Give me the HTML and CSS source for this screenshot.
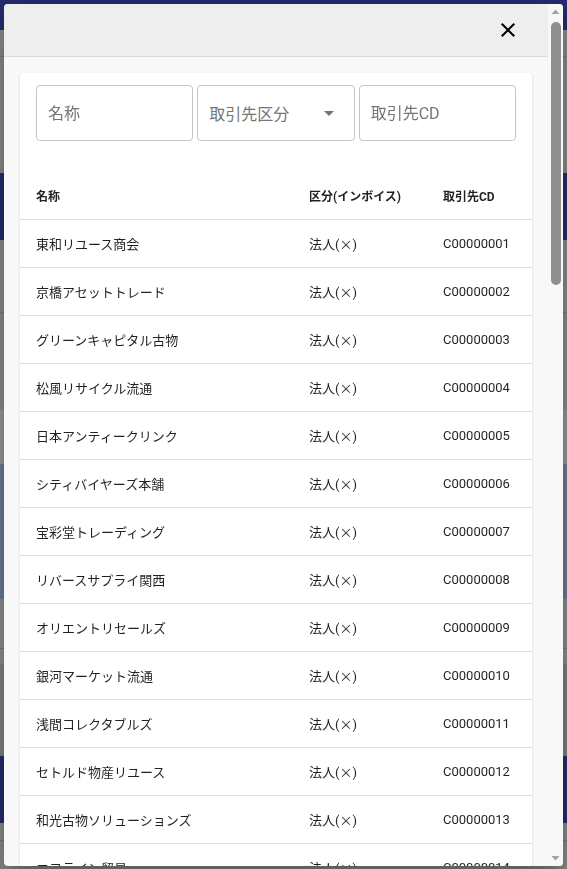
FILE: index.html
```html
<!DOCTYPE html>
<html lang="ja">
<head>
<meta charset="utf-8">
<title>取引先選択</title>
<link rel="stylesheet" href="styles.css">
</head>
<body>
<div class="page-bg"></div>
<div class="dialog" role="dialog">
  <div class="dialog-main">
    <header class="dialog-header">
      <button class="close-btn" type="button" aria-label="閉じる">
        <svg viewBox="0 0 24 24" width="24" height="24"><path d="M19 6.41 17.59 5 12 10.59 6.41 5 5 6.41 10.59 12 5 17.59 6.41 19 12 13.41 17.59 19 19 17.59 13.41 12z"/></svg>
      </button>
    </header>
    <div class="dialog-body">
      <section class="card">
        <div class="filters">
          <input class="field" type="text" placeholder="名称">
          <div class="field select">
            <span class="select-label">取引先区分</span>
            <svg class="select-arrow" viewBox="0 0 24 24" width="24" height="24"><path d="M7 10l5 5 5-5z"/></svg>
          </div>
          <input class="field" type="text" placeholder="取引先CD">
        </div>
        <div class="grid">
          <div class="row head"><div class="cell">名称</div><div class="cell">区分(インボイス)</div><div class="cell">取引先CD</div></div>
          <div class="row"><div class="cell">東和リユース商会</div><div class="cell">法人(<span class="mark">×</span>)</div><div class="cell">C00000001</div></div>
          <div class="row"><div class="cell">京橋アセットトレード</div><div class="cell">法人(<span class="mark">×</span>)</div><div class="cell">C00000002</div></div>
          <div class="row"><div class="cell">グリーンキャピタル古物</div><div class="cell">法人(<span class="mark">×</span>)</div><div class="cell">C00000003</div></div>
          <div class="row"><div class="cell">松風リサイクル流通</div><div class="cell">法人(<span class="mark">×</span>)</div><div class="cell">C00000004</div></div>
          <div class="row"><div class="cell">日本アンティークリンク</div><div class="cell">法人(<span class="mark">×</span>)</div><div class="cell">C00000005</div></div>
          <div class="row"><div class="cell">シティバイヤーズ本舗</div><div class="cell">法人(<span class="mark">×</span>)</div><div class="cell">C00000006</div></div>
          <div class="row"><div class="cell">宝彩堂トレーディング</div><div class="cell">法人(<span class="mark">×</span>)</div><div class="cell">C00000007</div></div>
          <div class="row"><div class="cell">リバースサプライ関西</div><div class="cell">法人(<span class="mark">×</span>)</div><div class="cell">C00000008</div></div>
          <div class="row"><div class="cell">オリエントリセールズ</div><div class="cell">法人(<span class="mark">×</span>)</div><div class="cell">C00000009</div></div>
          <div class="row"><div class="cell">銀河マーケット流通</div><div class="cell">法人(<span class="mark">×</span>)</div><div class="cell">C00000010</div></div>
          <div class="row"><div class="cell">浅間コレクタブルズ</div><div class="cell">法人(<span class="mark">×</span>)</div><div class="cell">C00000011</div></div>
          <div class="row"><div class="cell">セトルド物産リユース</div><div class="cell">法人(<span class="mark">×</span>)</div><div class="cell">C00000012</div></div>
          <div class="row"><div class="cell">和光古物ソリューションズ</div><div class="cell">法人(<span class="mark">×</span>)</div><div class="cell">C00000013</div></div>
          <div class="row"><div class="cell">エコライン貿易</div><div class="cell">法人(<span class="mark">×</span>)</div><div class="cell">C00000014</div></div>
          <div class="row"><div class="cell">富士サイクルトレード</div><div class="cell">法人(<span class="mark">×</span>)</div><div class="cell">C00000015</div></div>
          <div class="row"><div class="cell">北斗リユースセンター</div><div class="cell">法人(<span class="mark">×</span>)</div><div class="cell">C00000016</div></div>
          <div class="row"><div class="cell">青葉アンティーク商事</div><div class="cell">法人(<span class="mark">×</span>)</div><div class="cell">C00000017</div></div>
          <div class="row"><div class="cell">大和ブランド買取</div><div class="cell">法人(<span class="mark">×</span>)</div><div class="cell">C00000018</div></div>
          <div class="row"><div class="cell">さくら古物商会</div><div class="cell">法人(<span class="mark">×</span>)</div><div class="cell">C00000019</div></div>
          <div class="row"><div class="cell">丸善リサイクル</div><div class="cell">法人(<span class="mark">×</span>)</div><div class="cell">C00000020</div></div>
        </div>
      </section>
    </div>
  </div>
  <div class="scrollbar" aria-hidden="true">
    <svg class="sb-arrow" viewBox="0 0 15 15" width="15" height="15"><path d="M3.5 10 7.5 5.5 11.5 10z"/></svg>
    <div class="sb-track">
      <div class="sb-thumb"></div>
    </div>
    <svg class="sb-arrow" viewBox="0 0 15 15" width="15" height="15"><path d="M3.5 5 7.5 9.5 11.5 5z"/></svg>
  </div>
</div>
</body>
</html>
```

FILE: styles.css
```css
html, body {
  margin: 0;
  padding: 0;
  height: 100%;
}

body {
  font-family: "Roboto", "Noto Sans CJK JP", sans-serif;
  color: rgba(0, 0, 0, 0.87);
  overflow: hidden;
}

.page-bg {
  height: 100%;
  background: linear-gradient(to bottom,
    #262c6e 0 30px,
    #8a8a8a 30px 56px,
    #777777 56px 57px,
    #8a8a8a 57px 173px,
    #262c6e 173px 240px,
    #8b8b8b 240px 312px,
    #7a7a7a 312px 313px,
    #8b8b8b 313px 409px,
    #979797 409px 464px,
    #6c7d95 464px 599px,
    #8e8e8e 599px 648px,
    #7a7a7a 648px 649px,
    #8e8e8e 649px 664px,
    #808080 664px 756px,
    #262c6e 756px 823px,
    #8a8a8a 823px 840px,
    #777777 840px 841px,
    #8a8a8a 841px);
}

.dialog {
  position: fixed;
  top: 4px;
  left: 4px;
  right: 4px;
  bottom: 3px;
  display: flex;
  background: #f8f8f8;
  border-radius: 4px;
  overflow: hidden;
  box-shadow: 0 11px 15px -7px rgba(0, 0, 0, 0.2), 0 24px 38px 3px rgba(0, 0, 0, 0.14), 0 9px 46px 8px rgba(0, 0, 0, 0.12);
}

.dialog-main {
  flex: 1;
  min-width: 0;
  overflow: hidden;
}

.dialog-header {
  height: 53px;
  box-sizing: border-box;
  background: #eeeeee;
  border-bottom: 1px solid #dcdcdc;
  display: flex;
  align-items: center;
  justify-content: flex-end;
  padding-right: 16px;
}

.close-btn {
  width: 48px;
  height: 48px;
  border: 0;
  padding: 0;
  background: transparent;
  display: flex;
  align-items: center;
  justify-content: center;
  cursor: pointer;
}

.close-btn svg {
  fill: #000;
}

.dialog-body {
  padding: 16px;
}

.card {
  background: #ffffff;
  border-radius: 4px;
  box-shadow: 0 2px 1px -1px rgba(0, 0, 0, 0.2), 0 1px 1px 0 rgba(0, 0, 0, 0.14), 0 1px 3px 0 rgba(0, 0, 0, 0.12);
}

.filters {
  display: grid;
  grid-template-columns: 1fr 1fr 1fr;
  gap: 4px;
  padding: 12px 16px 31px;
}

.field {
  box-sizing: border-box;
  height: 56px;
  width: 100%;
  border: 1px solid #c4c4c4;
  border-radius: 4px;
  padding: 0 11px;
  font-family: inherit;
  font-size: 16px;
  color: rgba(0, 0, 0, 0.87);
  background: #fff;
  outline: none;
}

.field::placeholder {
  color: #757575;
  opacity: 1;
}

.select {
  display: flex;
  align-items: center;
  justify-content: space-between;
  padding-right: 13px;
}

.select-label {
  color: #757575;
}

.select-arrow {
  fill: #757575;
}

.grid {
  font-size: 13px;
}

.row {
  display: grid;
  grid-template-columns: 273px 134px 1fr;
  height: 48px;
  box-sizing: border-box;
  border-bottom: 1px solid #e0e0e0;
  align-items: center;
}

.cell {
  padding: 0 16px;
  white-space: nowrap;
}

.mark {
  font-family: "Noto Sans CJK JP", sans-serif;
  font-weight: 400;
}

.row.head {
  font-size: 12px;
  font-weight: 700;
  color: rgba(0, 0, 0, 0.87);
}

.scrollbar {
  flex: none;
  width: 15px;
  display: flex;
  flex-direction: column;
  background: #f8f8f8;
}

.sb-arrow {
  flex: none;
  display: block;
  fill: #a3a3a3;
}

.sb-track {
  flex: 1;
  padding-top: 3px;
  display: flex;
  justify-content: center;
}

.sb-thumb {
  width: 10px;
  height: 263px;
  border-radius: 5px;
  background: #8f8f8f;
}
```
